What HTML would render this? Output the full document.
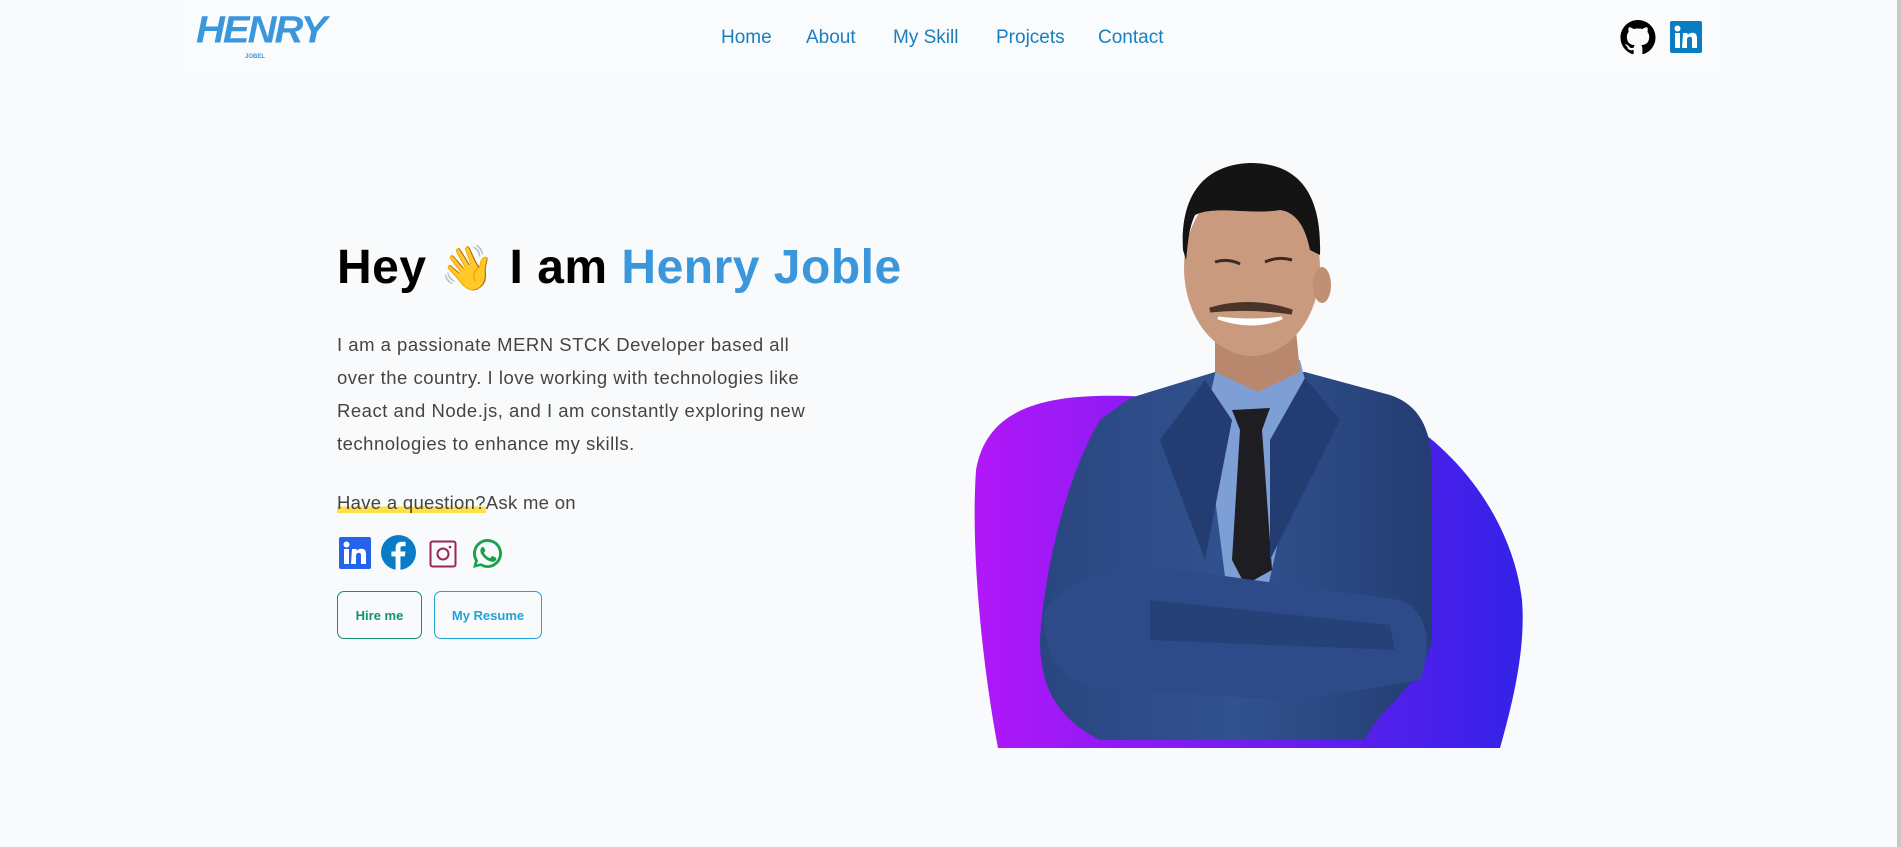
<!DOCTYPE html>
<html><head><meta charset="utf-8">
<style>
*{margin:0;padding:0;box-sizing:border-box}
body{width:1901px;height:847px;background:#f8fafc;font-family:"Liberation Sans",sans-serif;position:relative;overflow:hidden}
.abs{position:absolute;white-space:nowrap}
.hdr{position:absolute;left:180px;top:0;width:1542px;height:78px;background:#f9fbfd}
.nav{font-size:19px;color:#1a7fc0;top:27px}
h1{position:absolute;left:337px;top:240px;font-size:48px;font-weight:bold;color:#000;white-space:nowrap;letter-spacing:0.5px}
h1 span{color:#3b97dc}
.p{position:absolute;left:337px;top:328px;font-size:18.5px;letter-spacing:0.5px;line-height:33px;color:#444;white-space:nowrap}
.q{position:absolute;left:337px;top:492px;font-size:18.5px;color:#444;letter-spacing:0.3px}
.q u{text-decoration:none;background:linear-gradient(transparent 70%,#fde047 70%)}
.btn{position:absolute;top:591px;height:48px;border:1px solid;border-radius:7px;font-size:13px;font-weight:bold;display:flex;align-items:center;justify-content:center}
</style></head><body>
<div class="hdr"></div>
<div class="abs" style="left:196px;top:8px;font-size:40px;font-weight:900;color:#3b97dc;font-style:italic;letter-spacing:-2px;transform:scaleY(0.95)">HENRY</div>
<div class="abs" style="left:245px;top:54px;font-size:6px;font-weight:bold;color:#3b97dc">JOBEL</div>
<div class="abs nav" style="left:721px">Home</div>
<div class="abs nav" style="left:806px">About</div>
<div class="abs nav" style="left:893px">My Skill</div>
<div class="abs nav" style="left:996px">Projcets</div>
<div class="abs nav" style="left:1098px">Contact</div>
<svg class="abs" style="left:1620px;top:20px" width="36" height="35" viewBox="0 0 16 16"><path fill="#000" d="M8 0C3.58 0 0 3.58 0 8c0 3.54 2.29 6.530 5.47 7.59.4.07.55-.17.55-.38 0-.19-.01-.82-.01-1.49-2.01.37-2.53-.49-2.69-.94-.09-.23-.48-.94-.82-1.13-.28-.15-.68-.52-.01-.53.63-.01 1.08.58 1.23.82.72 1.21 1.87.87 2.33.66.07-.52.28-.87.51-1.07-1.78-.2-3.64-.89-3.64-3.95 0-.87.31-1.59.82-2.15-.08-.2-.36-1.02.08-2.12 0 0 .67-.21 2.2.82.64-.18 1.32-.27 2-.27.68 0 1.36.09 2 .27 1.53-1.04 2.2-.82 2.2-.82.44 1.1.16 1.92.08 2.12.51.56.82 1.27.82 2.15 0 3.07-1.87 3.75-3.65 3.95.29.25.54.73.54 1.48 0 1.07-.01 1.93-.01 2.2 0 .21.15.46.55.38A8.013 8.013 0 0016 8c0-4.42-3.58-8-8-8z"/></svg>
<svg class="abs" style="left:1670px;top:21px" width="32" height="32" viewBox="0 0 32 32"><rect width="32" height="32" rx="2" fill="#0a7cc2"/><rect x="5" y="12" width="5" height="15" fill="#fff"/><circle cx="7.5" cy="7.5" r="3" fill="#fff"/><path d="M13 12h4.6v2.2c.8-1.4 2.4-2.5 4.8-2.5 4 0 4.6 2.6 4.6 6V27h-5v-8c0-1.8-.2-3.2-2.2-3.2s-2.8 1.5-2.8 3.2V27h-5z" fill="#fff"/></svg>

<h1>Hey <span style="color:#f5b921;font-size:44px">👋</span> I am <span>Henry Joble</span></h1>
<div class="p">I am a passionate MERN STCK Developer based all<br>over the country. I love working with technologies like<br>React and Node.js, and I am constantly exploring new<br>technologies to enhance my skills.</div>
<div class="q"><u>Have a question?</u>Ask me on</div>

<svg class="abs" style="left:339px;top:537px" width="32" height="32" viewBox="0 0 32 32"><rect width="32" height="32" rx="2" fill="#2563eb"/><rect x="5" y="12" width="5" height="15" fill="#fff"/><circle cx="7.5" cy="7.5" r="3" fill="#fff"/><path d="M13 12h4.6v2.2c.8-1.4 2.4-2.5 4.8-2.5 4 0 4.6 2.6 4.6 6V27h-5v-8c0-1.8-.2-3.2-2.2-3.2s-2.8 1.5-2.8 3.2V27h-5z" fill="#fff"/></svg>
<svg class="abs" style="left:381px;top:535px" width="35" height="35" viewBox="0 0 36 36"><circle cx="18" cy="18" r="18" fill="#0a7cc7"/><path d="M20 36V22h4.5l.7-5H20v-3c0-1.5.5-2.5 2.6-2.5h2.7V7.2c-.5-.1-2-.2-3.9-.2-3.9 0-6.4 2.3-6.4 6.6V17h-4.3v5H15v14z" fill="#fff"/></svg>
<svg class="abs" style="left:429px;top:540px" width="28" height="28" viewBox="0 0 28 28"><rect x="1.5" y="1.5" width="25" height="25" rx="2" fill="none" stroke="#9d2653" stroke-width="2"/><circle cx="14" cy="14" r="5.5" fill="none" stroke="#9d2653" stroke-width="2"/><circle cx="21" cy="7" r="1.3" fill="#9d2653"/></svg>
<svg class="abs" style="left:471px;top:537px" width="33" height="33" viewBox="0 0 24 24"><path fill="#16a34a" d="M12 1.5A10.5 10.5 0 0 0 2.9 17.3L1.5 22.5l5.3-1.4A10.5 10.5 0 1 0 12 1.5zm0 2a8.5 8.5 0 1 1-4.4 15.8l-.3-.2-3 .8.8-3-.2-.3A8.5 8.5 0 0 1 12 3.5zM8.6 7.3c-.2 0-.5 0-.8.3-.3.3-1 1-1 2.4s1 2.8 1.2 3c.1.2 2 3.1 4.9 4.3 2.4 1 2.9.8 3.4.7.5 0 1.7-.7 1.9-1.4.2-.7.2-1.3.2-1.4-.1-.1-.3-.2-.6-.3l-2-1c-.3-.1-.5-.1-.7.1l-.9 1.2c-.2.2-.3.2-.6.1-.3-.2-1.3-.5-2.4-1.5-.9-.8-1.5-1.8-1.7-2.1-.2-.3 0-.5.1-.6l.5-.5.3-.5c.1-.2 0-.4 0-.5L9.4 7.7c-.2-.4-.4-.4-.6-.4z"/></svg>

<div class="btn" style="left:337px;width:85px;border-color:#15926b;color:#15926b">Hire me</div>
<div class="btn" style="left:434px;width:108px;border-color:#22a3d8;color:#22a3d8">My Resume</div>

<svg class="abs" style="left:0;top:0" width="1901" height="847" viewBox="0 0 1901 847">
<defs><linearGradient id="g" x1="0" x2="1"><stop offset="0" stop-color="#b118f8"/><stop offset="1" stop-color="#3322e8"/></linearGradient>
<linearGradient id="s" x1="0" x2="1"><stop offset="0" stop-color="#2a4680"/><stop offset="0.5" stop-color="#31528f"/><stop offset="1" stop-color="#243d73"/></linearGradient></defs>
<path d="M998 748 L1500 748 C1512 705 1526 650 1522 600 C1512 520 1460 455 1405 420 L1150 397 C1060 392 988 400 976 470 C970 560 985 680 998 748Z" fill="url(#g)"/>
<path d="M1130 398 L1215 372 L1305 372 L1390 395 C1420 405 1432 430 1432 470 L1432 640 C1420 690 1380 705 1365 740 L1100 740 C1060 720 1040 690 1040 640 C1045 560 1070 470 1100 420 Z" fill="url(#s)"/>
<path d="M1218 360 L1300 360 L1310 400 L1265 600 L1228 600 L1205 420 Z" fill="#7e9fd6"/>
<path d="M1232 410 L1270 408 L1262 430 L1272 570 L1245 585 L1232 560 L1240 430 Z" fill="#1e1e22"/>
<path d="M1205 380 L1232 420 L1205 560 L1160 440 Z" fill="#233c72"/>
<path d="M1305 378 L1270 440 L1270 560 L1340 420 Z" fill="#233c72"/>
<path d="M1045 610 C1060 580 1120 560 1180 570 L1400 600 C1430 610 1432 650 1420 680 L1300 700 L1100 690 C1060 680 1040 650 1045 610Z" fill="#2d4b88"/>
<path d="M1150 600 L1390 625 L1395 650 L1150 640 Z" fill="#223a6d" opacity="0.6"/>
<path d="M1215 320 L1295 320 L1300 372 L1258 392 L1215 372 Z" fill="#b9876d"/>
<ellipse cx="1252" cy="268" rx="68" ry="88" fill="#c99a7e"/>
<path d="M1183 250 C1180 200 1200 165 1250 163 C1300 163 1322 195 1320 255 L1310 250 C1305 225 1295 212 1280 210 C1250 215 1215 205 1195 215 C1188 230 1188 245 1186 260 Z" fill="#141414"/>
<ellipse cx="1322" cy="285" rx="9" ry="18" fill="#c08f74"/>
<path d="M1215 262 Q1228 258 1240 264 M1265 262 Q1278 256 1292 260" stroke="#3a2a22" stroke-width="3" fill="none"/>
<path d="M1210 310 Q1250 298 1292 312 Q1250 306 1210 310Z" fill="#4a3328" stroke="#4a3328" stroke-width="5"/>
<path d="M1218 318 Q1252 330 1282 318 Q1252 322 1218 318Z" fill="#fff" stroke="#fff" stroke-width="3"/>
</svg>

<div class="abs" style="left:1897px;top:0;width:4px;height:847px;background:#c8c8c8"></div>
</body></html>
